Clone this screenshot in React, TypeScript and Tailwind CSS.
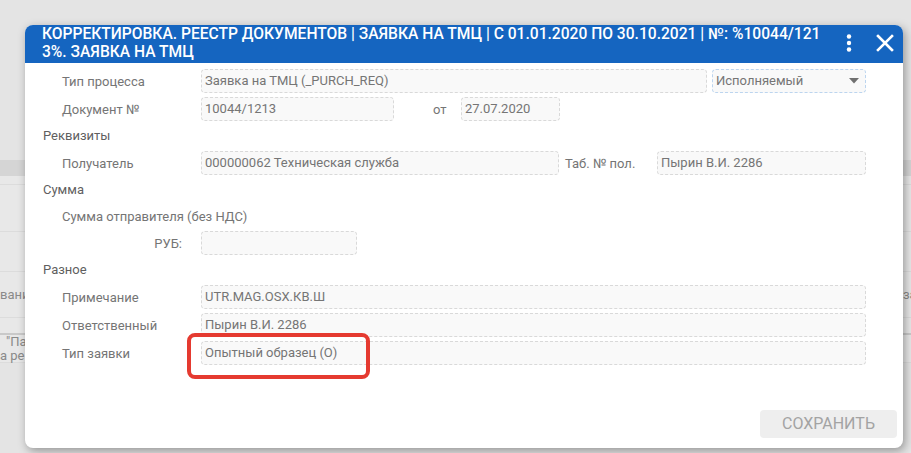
import React from "react"

const label = "text-[13px] text-[#757575] leading-none"
const field =
  "h-[24px] rounded-[4px] border border-dashed border-[#d9d9d9] bg-[#f9f9f9] px-[3px] flex items-center text-[13px] text-[#757575] truncate"
const section = "h-[22px] flex items-center text-[13px] text-[#5f5f5f]"
const row = "h-[24px] flex items-center"

function Label({ children }: { children: React.ReactNode }) {
  return <span className={`w-[158px] shrink-0 pl-[19px] ${label}`}>{children}</span>
}

function BackgroundPage() {
  return (
    <div className="flex flex-col text-[13px] text-[#8a8a8a]">
      <div className="h-[160px]" />
      <div className="h-[16px] bg-[#d5d5d5]" />
      <div className="h-[9px] bg-[#e8e8e8] border-b border-[#dcdcdc]" />
      <div className="h-[47px] bg-[#e8e8e8] border-b border-[#dcdcdc]" />
      <div className="h-[40px] bg-[#e8e8e8] border-b border-[#dcdcdc]" />
      <div className="h-[46px] bg-[#e8e8e8] border-b border-[#dcdcdc] flex items-center justify-between">
        <span>вани</span>
        <span className="w-[8px] overflow-hidden">за</span>
      </div>
      <div className="h-[17px] bg-[#e8e8e8] border-b-2 border-[#c9c9c9]" />
      <div className="h-[14px] bg-[#e8e8e8] pl-[6px] leading-[14px]">"Па</div>
      <div className="h-[14px] bg-[#e8e8e8] border-b border-[#dcdcdc] leading-[14px]">а ре</div>
    </div>
  )
}

export default function App() {
  return (
    <div className="relative w-[911px] h-[453px] overflow-hidden bg-[#e4e4e4] font-['Roboto',sans-serif]">
      <BackgroundPage />

      {/* Modal */}
      <div className="absolute left-[25px] top-[25px] w-[878px] h-[423px] rounded-[8px] bg-white shadow-[2px_3px_10px_rgba(0,0,0,0.35)] overflow-hidden flex flex-col">
        <div className="bg-[#1565c0] flex items-start pl-[17px] pb-[2px]">
          <div className="w-[786px] text-white text-[15.6px] leading-[18px] font-medium uppercase break-all">
            Корректировка. Реестр документов | Заявка на ТМЦ | С 01.01.2020 по 30.10.2021 | №: %10044/1213%. Заявка на ТМЦ
          </div>
          <div className="ml-auto h-[36px] flex items-center gap-[12px] pr-[6px]">
            <svg width="24" height="24" viewBox="0 0 24 24" fill="white">
              <circle cx="12" cy="5.5" r="2.2" />
              <circle cx="12" cy="12" r="2.2" />
              <circle cx="12" cy="18.5" r="2.2" />
            </svg>
            <svg width="24" height="24" viewBox="0 0 24 24" stroke="white" strokeWidth="2.6" strokeLinecap="square">
              <path d="M5 5 L19 19 M19 5 L5 19" />
            </svg>
          </div>
        </div>

        <div className="flex flex-col gap-1 pt-[6px] pl-[18px]">
          <div className={row}>
            <Label>Тип процесса</Label>
            <div className={`${field} w-[506px]`}>Заявка на ТМЦ (_PURCH_REQ)</div>
            <div className="ml-[5px] w-[154px] h-[24px] rounded-[4px] border border-dashed border-[#bcd5ef] bg-[#f9f9f9] pl-[3px] pr-[6px] flex items-center justify-between text-[13px] text-[#757575]">
              <span>Исполняемый</span>
              <svg width="10" height="6" viewBox="0 0 10 6">
                <path d="M0 0 H10 L5 5.5 Z" fill="#707070" />
              </svg>
            </div>
          </div>

          <div className={row}>
            <Label>Документ №</Label>
            <div className={`${field} w-[193px]`}>10044/1213</div>
            <span className={`w-[67px] pl-[39px] ${label}`}>от</span>
            <div className={`${field} w-[99px]`}>27.07.2020</div>
          </div>

          <div className={section}>Реквизиты</div>

          <div className={row}>
            <Label>Получатель</Label>
            <div className={`${field} w-[358px]`}>000000062 Техническая служба</div>
            <span className={`w-[98px] pl-[6px] ${label}`}>Таб. № пол.</span>
            <div className={`${field} w-[209px]`}>Пырин В.И. 2286</div>
          </div>

          <div className={section}>Сумма</div>

          <div className="h-[22px] flex items-center">
            <span className={`pl-[19px] ${label}`}>Сумма отправителя (без НДС)</span>
          </div>

          <div className={row}>
            <span className={`w-[158px] shrink-0 pr-[19px] text-right ${label}`}>РУБ:</span>
            <div className={`${field} w-[156px]`} />
          </div>

          <div className={section}>Разное</div>

          <div className={row}>
            <Label>Примечание</Label>
            <div className={`${field} w-[665px]`}>UTR.MAG.OSX.КВ.Ш</div>
          </div>

          <div className={row}>
            <Label>Ответственный</Label>
            <div className={`${field} w-[665px]`}>Пырин В.И. 2286</div>
          </div>

          <div className={row}>
            <Label>Тип заявки</Label>
            <div className="relative">
              <div className={`${field} w-[665px]`}>Опытный образец (О)</div>
              {/* annotation highlight */}
              <div className="absolute -left-[14px] -top-[8px] w-[183px] h-[46px] rounded-[8px] border-4 border-[#e53a30]" />
            </div>
          </div>
        </div>

        <div className="mt-auto flex justify-end pr-[6px] pb-[10px]">
          <button className="w-[137px] h-[28px] rounded-[4px] bg-[#eeeeee] text-[16px] text-[#a3a3a3] uppercase">
            Сохранить
          </button>
        </div>
      </div>
    </div>
  )
}
